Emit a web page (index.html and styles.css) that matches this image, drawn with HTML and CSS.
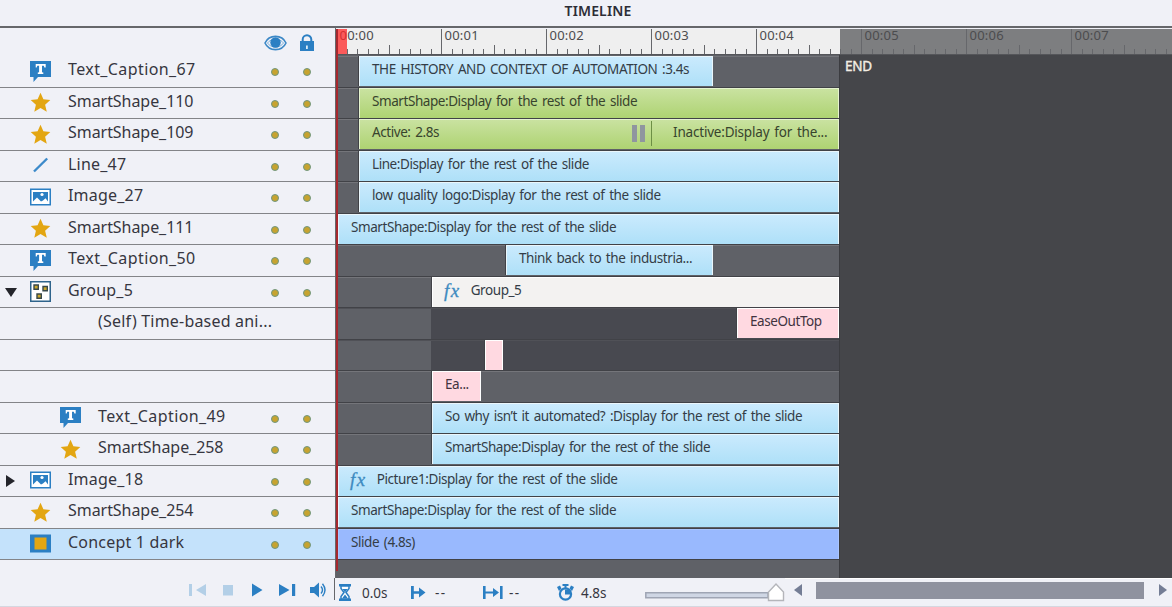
FILE: index.html
```html
<!DOCTYPE html>
<html lang="en">
<head>
<meta charset="utf-8">
<title>Timeline</title>
<link rel="stylesheet" href="styles.css">
</head>
<body>
<svg class="defs" aria-hidden="true">
  <symbol id="caption" viewBox="0 0 21 21"><path fill="#2b7fc3" d="M0 0h21v16H8l-4.500 5V16H0z"/><path fill="#fff" d="M5.700 3h10v3.600h-1.300l-.6-1.800h-1.800v6.400l1.300.4V13H7.800v-1.400l1.300-.4V4.800H7.300l-.6 1.800h-1z"/></symbol>
  <symbol id="star" viewBox="0 0 21 21"><path fill="#e3a612" d="M10.500.8l2.900 6.500 6.900.6-5.200 4.900 1.700 7-6.300-3.900-6.200 3.900 1.600-7L.7 7.900l6.900-.6z"/></symbol>
  <symbol id="line" viewBox="0 0 21 21"><path stroke="#3c8aca" stroke-width="2.400" d="M4 16.500L17.200 3.500"/></symbol>
  <symbol id="image" viewBox="0 0 21 21"><path fill="#fff" stroke="#2b7fc3" stroke-width="1.500" d="M.75 2.250h19.500v15.500H.75z"/><path fill="#2b7fc3" d="M3 5h15v9.500l-2.500-3.300-2.500 2.300-2 1-4-4-4 4z"/><circle cx="12" cy="7.500" r="1.600" fill="#fff"/></symbol>
  <symbol id="group" viewBox="0 0 21 21"><path fill="#fff" stroke="#2f648c" stroke-width="1.500" d="M.75.75h19.500v19.500H.75z"/><path fill="#c9a72c" stroke="#38484a" stroke-width="1.400" d="M4 4h4.300v4.300H4zM13 5.500h4.300v4.300H13zM7 13h4.300v4.300H7z"/></symbol>
  <symbol id="slide" viewBox="0 0 21 21"><path fill="#2b7fc3" d="M0 1.500h21v18H0z"/><path fill="#e3a612" d="M4.500 4.500h12v12h-12z"/></symbol>
</svg>
<main class="panel">
  <header class="title">TIMELINE</header>
  <section class="body">
    <div class="names">
      <div class="names-head">
        <svg class="eye" viewBox="0 0 23 16"><path fill="#f0f1f7" stroke="#3c88c6" stroke-width="1.600" d="M1 8C5-.8 18-.8 22 8 18 16.800 5 16.800 1 8z"/><path fill="none" stroke="#7fb2dc" d="M3.500 8C7 3 16 3 19.500 8 16 13.500 7 13.500 3.500 8z"/><circle cx="11.500" cy="7.500" r="5.200" fill="#2b7fc3"/></svg>
        <svg class="lock" viewBox="0 0 14 17"><path fill="#2b7fc3" d="M0 7h14v10H0z"/><path fill="none" stroke="#2b7fc3" stroke-width="2" d="M2.700 8V5.500a4.300 4.300 0 0 1 8.600 0V8"/><path fill="#dcecf8" d="M6 11.500h1.800V15H6z"/></svg>
      </div>
      <div id="names"></div>
    </div>
    <div class="time">
      <div class="ruler" id="ruler"></div>
      <div class="stage">
        <div class="tracks" id="tracks"></div>
        <div class="end">END</div>
      </div>
      <div class="playhead"></div>
    </div>
  </section>
  <footer class="foot">
    <div class="play">
      <svg viewBox="0 0 150 20">
        <path fill="#b3cfe7" d="M9 4h3v12H9zM26 4v12l-10-6zM43 5h10v10.500H43z"/>
        <path fill="#2b7fc3" d="M72 3.500l10.500 6.500L72 16.500zM99 4l10.500 6-10.500 6zM112 4h3.200v12H112zM130 7h4l5-4.500v15l-5-4.500h-4z"/>
        <path fill="none" stroke="#2b7fc3" stroke-width="1.400" d="M141 6.500q3 3.500 0 7M142.500 3.700q5 6.300 0 12.600"/>
      </svg>
    </div>
    <div class="stats">
      <svg class="i-glass" viewBox="0 0 12 17"><path fill="#2b7fc3" d="M0 0h12v2.500H0zM0 14.500h12V17H0z"/><path fill="#fff" stroke="#2b7fc3" stroke-width="1.500" d="M2 2v2.500l3 4-3 4V15h8v-2.500l-3-4 3-4V2z"/><path fill="#2b7fc3" d="M3.500 5h5L6 8.500zM3 14.500l3-4 3 4z"/></svg>
      <span class="s-time">0.0s</span>
      <svg class="i-start" viewBox="0 0 15 13"><path fill="#2b7fc3" d="M0 0h2.800v13H0zM2.800 5.300H8V1.500l6.500 5L8 11.500V7.700H2.800z"/></svg>
      <span class="s-a">--</span>
      <svg class="i-span" viewBox="0 0 20 13"><path fill="#2b7fc3" d="M0 0h2.600v13H0zM17 0h2.600v13H17zM2.600 5.500H10V2l6 4.500-6 4.500V7.500H2.600z"/></svg>
      <span class="s-b">--</span>
      <svg class="i-watch" viewBox="0 0 17 17"><circle cx="8.500" cy="10" r="5.600" fill="none" stroke="#2b7fc3" stroke-width="2.200"/><path fill="#2b7fc3" d="M5.500 0h6v2h-2v2.500h-2V2h-2zM8 5.500h5v5H8zM0 3l3-1.500 1.500 3L2 7zM17 3l-3-1.500-1.500 3L15 7z"/></svg>
      <span class="s-time">4.8s</span>
    </div>
    <div class="slider"><svg viewBox="0 0 142 20"><path fill="#cfd6e4" stroke="#9fa5b4" stroke-width="1.500" d="M1.800 10.700H124v5H1.800z"/><path fill="#fff" stroke="#b4b5ba" stroke-width="1.400" d="M124.500 18.500V10l7.500-8 7.500 8v8.500z"/></svg></div>
    <div class="scroll">
      <svg class="arrow" viewBox="0 0 8 12"><path fill="#747d95" d="M8 0v12L0 6z"/></svg>
      <div class="thumb"></div>
      <svg class="arrow" viewBox="0 0 8 12"><path fill="#747d95" d="M0 0v12l8-6z"/></svg>
    </div>
  </footer>
</main>
<script src="main.js"></script>
</body>
</html>
```
FILE: styles.css
```css
* { box-sizing: border-box; }
body { margin: 0; background: #f0f1f7; font-family: "Noto Sans", sans-serif; color: #363640; overflow: hidden; }
.defs { display: none; }
svg { display: block; }
.panel { width: 1172px; height: 607px; display: grid; grid-template-rows: 26px 552px 28px; border-bottom: 1px solid #d5d7e0; }
.title { font-weight: 600; font-size: 14px; line-height: 22px; text-align: center; padding-left: 24px; color: #2c2c36; letter-spacing: 0.15px; }
.body { display: grid; grid-template-columns: 335px 837px; border-top: 2px solid #66676b; }
.names-head { height: 28px; display: flex; padding: 6px 0 0 263.500px; }
.eye { width: 23px; height: 16px; margin-top: 1px; }
.lock { width: 14px; height: 17px; margin-left: 13px; }
.name-row { height: 31.5px; border-bottom: 1px solid #838488; display: grid; grid-template-columns: 30px 38px 1fr 31.500px 32.500px; }
.name-row.nested { grid-template-columns: 60px 38px 1fr 31.500px 32.500px; }
.name-row.selected { background: #c4e2fb; }
.twist { padding: 9px 0 0 5px; }
.twist svg { width: 12px; height: 12px; }
.icon svg { width: 21px; height: 21px; margin-top: 4.500px; }
.label { font-size: 16px; line-height: 27.500px; white-space: nowrap; letter-spacing: 0.2px; }
.label.caption { letter-spacing: 0.4px; }
.label.star { letter-spacing: -0.05px; }
.dot { width: 8px; height: 8px; border-radius: 50%; border: 1.500px solid #6f9780; background: #c7a32f; margin-top: 12px; }
.time { position: relative; border-left: 1px solid #66676b; background: #45464a; }
.ruler { height: 27px; display: flex; background: linear-gradient(90deg, #efefef 504px, #7d7e80 504px); border-bottom: 1px solid #55565a; border-top: 1px solid #f0f1f7; }
.second { flex: 0 0 105px; height: 25px; display: grid; grid-template-columns: repeat(10, 10.500px); align-items: end; position: relative; }
.tick { height: 5px; border-left: 1px solid #66676b; }
.tick.half { height: 9px; }
.tick.major { height: 25px; }
.clock { position: absolute; left: 3.500px; top: -2px; font-size: 13px; line-height: 17px; letter-spacing: 0.25px; color: #4c4c4e; }
.stage { display: flex; height: 523px; }
.tracks { width: 504px; background: #5f6167; border-right: 1px solid #3b3c40; padding-top: 1px; }
.track { height: 31.500px; display: flex; border-bottom: 1px solid #414247; border-top: 1px solid #74757a; }
.track.deep { background: linear-gradient(90deg, transparent 95px, #484950 95px); border-top-color: #505157; }
.bar { height: 30px; margin-top: -1px; flex: none; border: 1px solid #eaf6fb; border-bottom: 0; box-shadow: -1px 0 #414247; display: flex; overflow: hidden; white-space: nowrap; color: #343d47; }
.bar-text { font-size: 13.500px; line-height: 25.500px; padding-left: 12px; letter-spacing: -0.43px; word-spacing: 1.600px; }
.blue { background: linear-gradient(#caeafd, #aee0f8); }
.green { background: linear-gradient(#c9e2a0, #aed372); border-color: #e5f3cf; color: #38442d; }
.gray { background: #f3f2f1; border-color: #fff; }
.pink { background: #ffd9e1; border-color: #fff; color: #42333f; }
.indigo { background: #99b9fe; border-color: #a9c5ff; }
.fx { font: italic 19px/25px "Liberation Serif", serif; color: #3d8ac0; padding-left: 11px; letter-spacing: 1.500px; -webkit-text-stroke: .3px #3d8ac0; }
.fx + .bar-text { padding-left: 10px; }
.split { display: flex; padding-left: 193px; }
.pause { width: 13px; height: 17px; margin-top: 5px; border: solid #8f969f; border-width: 0 5px; }
.second-state { border-left: 1px solid #6d8f45; height: 25px; margin: 1px 0 0 6px; padding-left: 21px; }
.second-state .bar-text { padding: 0; line-height: 23.500px; display: block; letter-spacing: -0.2px; }
.end { font-size: 13.500px; line-height: 23px; color: #f3eee4; padding-left: 5px; letter-spacing: -0.3px; -webkit-text-stroke: .4px; }
.playhead { position: absolute; left: 0; top: 1px; width: 11px; height: 542px; border-left: 2px solid #a6282e; }
.playhead::before { content: ""; display: block; width: 9px; height: 25px; background: #ff2828; opacity: .75; }
.foot { display: grid; grid-template-columns: 335px 308px 142px 1fr; }
.play { padding: 2px 0 0 180px; border-right: 1px solid #66676b; height: 22px; }
.play svg { width: 150px; height: 20px; }
.stats { display: flex; padding-left: 4px; font-size: 13.500px; line-height: 30px; letter-spacing: 0; }
.i-glass { width: 12px; height: 17px; margin: 6px 11px 0 0; }
.s-time { width: 49px; }
.i-start { width: 15px; height: 13px; margin: 8px 9px 0 0; }
.s-a, .s-b { letter-spacing: 1.500px; }
.s-a { width: 48px; }
.i-span { width: 20px; height: 13px; margin: 8px 6px 0 0; }
.s-b { width: 48px; }
.i-watch { width: 17px; height: 17px; margin: 6px 7px 0 0; }
.slider svg { width: 142px; height: 20px; margin: 4px 0 0 1px; }
.scroll { display: flex; padding: 3px 0 0 9px; border-top: 1px solid #fff; }
.arrow { width: 8px; height: 12px; margin-top: 2px; }
.thumb { width: 328px; height: 17px; background: #8f929f; margin: 0 15px 0 14px; }
```
FILE: main.js
```js
const REST = ':Display for the rest of the slide';
// Bars are [start px, width px, colour, text, has effects]
const rows = [
  { icon: 'caption', name: 'Text_Caption_67', bars: [[22, 355, 'blue', 'THE HISTORY AND CONTEXT OF AUTOMATION :3.4s']] },
  { icon: 'star', name: 'SmartShape_110', bars: [[22, 481, 'green', 'SmartShape' + REST]] },
  { icon: 'star', name: 'SmartShape_109', bars: [[22, 481, 'green', 'Active: 2.8s']], split: 'Inactive:Display for the...' },
  { icon: 'line', name: 'Line_47', bars: [[22, 481, 'blue', 'Line' + REST]] },
  { icon: 'image', name: 'Image_27', bars: [[22, 481, 'blue', 'low quality logo' + REST]] },
  { icon: 'star', name: 'SmartShape_111', bars: [[1, 502, 'blue', 'SmartShape' + REST]] },
  { icon: 'caption', name: 'Text_Caption_50', bars: [[169, 208, 'blue', 'Think back to the industria...']] },
  { icon: 'group', name: 'Group_5', twist: 'M0 2h12L6 11z', bars: [[95, 408, 'gray', 'Group_5', true]] },
  { name: '(Self) Time-based ani...', nested: true, plain: true, deep: true, bars: [[400, 103, 'pink', 'EaseOutTop']] },
  { name: '', plain: true, deep: true, bars: [[148, 19, 'pink', '']] },
  { name: '', plain: true, bars: [[95, 50, 'pink', 'Ea...']] },
  { icon: 'caption', name: 'Text_Caption_49', nested: true, bars: [[95, 408, 'blue', 'So why isn’t it automated? ' + REST]] },
  { icon: 'star', name: 'SmartShape_258', nested: true, bars: [[95, 408, 'blue', 'SmartShape' + REST]] },
  { icon: 'image', name: 'Image_18', twist: 'M1 0v12l9-6z', bars: [[1, 502, 'blue', 'Picture1' + REST, true]] },
  { icon: 'star', name: 'SmartShape_254', bars: [[1, 502, 'blue', 'SmartShape' + REST]] },
  { icon: 'slide', name: 'Concept 1 dark', selected: true, bars: [[1, 502, 'indigo', 'Slide (4.8s)']] }
];

document.getElementById('names').innerHTML = rows.map(r => `
  <div class="name-row${r.nested ? ' nested' : ''}${r.selected ? ' selected' : ''}">
    <div class="twist">${r.twist ? `<svg viewBox="0 0 12 12"><path fill="#24252b" d="${r.twist}"/></svg>` : ''}</div>
    <div class="icon">${r.icon ? `<svg><use href="#${r.icon}"/></svg>` : ''}</div>
    <div class="label ${r.icon || ''}">${r.name}</div>
    ${r.plain ? '' : '<i class="dot"></i><i class="dot"></i>'}
  </div>`).join('');

document.getElementById('tracks').innerHTML = rows.map(r => `
  <div class="track${r.deep ? ' deep' : ''}">${r.bars.map(([x, w, color, text, fx]) => `
    <div class="bar ${color}" style="margin-left:${x + 1}px;width:${w - 1}px">
      ${fx ? '<span class="fx">fx</span>' : ''}<span class="bar-text">${text}</span>
      ${r.split ? `<div class="split"><i class="pause"></i><div class="second-state"><span class="bar-text">${r.split}</span></div></div>` : ''}
    </div>`).join('')}
  </div>`).join('');

document.getElementById('ruler').innerHTML = Array.from({ length: 8 }, (_, s) => `
  <div class="second"><span class="clock">00:0${s}</span>${Array.from({ length: 10 }, (_, i) =>
    `<i class="tick${i === 0 ? ' major' : i === 5 ? ' half' : ''}"></i>`).join('')}</div>`).join('');
```
